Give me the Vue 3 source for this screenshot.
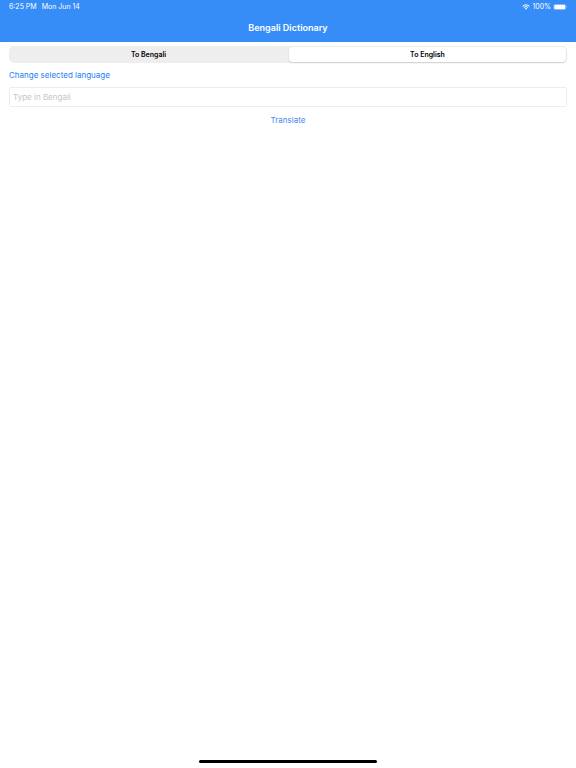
<script setup>
import { ref } from 'vue'

const direction = ref('english')
const word = ref('')

const directions = [
  { value: 'bengali', label: 'To Bengali' },
  { value: 'english', label: 'To English' },
]
</script>

<template>
  <div class="screen">
    <header class="top">
      <div class="status">
        <div class="status-group status-group--left">
          <span>6:25 PM</span>
          <span>Mon Jun 14</span>
        </div>
        <div class="status-group">
          <svg class="wifi" viewBox="0 0 16 12" aria-hidden="true">
            <path d="M1 4.6a10 10 0 0 1 14 0" />
            <path d="M3.5 7.2a6.4 6.4 0 0 1 9 0" />
            <path class="wifi-dot" d="M5.6 9.2a3.4 3.4 0 0 1 4.8 0L8 11.7z" />
          </svg>
          <span>100%</span>
          <svg class="battery" viewBox="0 0 28 12" aria-hidden="true">
            <rect class="battery-case" x="0.5" y="0.5" width="24" height="11" rx="3.4" />
            <rect class="battery-fill" x="1.5" y="1.5" width="22" height="9" rx="2.6" />
            <path class="battery-cap" d="M26 4v4c.9-.3 1.4-1.1 1.4-2s-.5-1.7-1.4-2z" />
          </svg>
        </div>
      </div>
      <h1 class="title">Bengali Dictionary</h1>
    </header>

    <main class="content">
      <div class="segment" role="radiogroup" aria-label="Direction">
        <label v-for="d in directions" :key="d.value" class="segment-item">
          <input v-model="direction" class="segment-input" type="radio" name="direction" :value="d.value" />
          <span class="segment-label">{{ d.label }}</span>
        </label>
      </div>

      <button type="button" class="link">Change selected language</button>

      <input v-model="word" class="field" type="text" placeholder="Type in Bengali" aria-label="Type in Bengali" />

      <button type="button" class="translate">Translate</button>
    </main>

    <div class="home"></div>
  </div>
</template>

<style>
body { background: #fff; }
</style>

<style scoped>
.screen {
  display: flex; flex-direction: column;
  min-height: 100vh; box-sizing: border-box;
  background: #fff; color: #000;
  font-family: Inter, "Liberation Sans", sans-serif;
}

.top { background: #368df7; color: #fff; }
.status {
  display: flex; justify-content: space-between; align-items: center;
  height: 14px; padding: 0 8px 0 9px;
  font-size: 7px; line-height: 14px;
}
.status-group { display: flex; align-items: center; gap: 2px; }
.status-group--left { gap: 5px; }

.wifi { width: 8px; height: 6px; fill: none; stroke: #fff; stroke-width: 2; }
.wifi-dot { fill: #fff; stroke: none; }
.battery { width: 15px; height: 6px; }
.battery-case { fill: none; stroke: #fff; stroke-opacity: 0.5; }
.battery-fill { fill: #fff; }
.battery-cap { fill: #fff; fill-opacity: 0.5; }

.title {
  margin: 0; height: 28px;
  font-size: 9px; font-weight: 600; line-height: 28px; text-align: center;
}

.content {
  display: flex; flex-direction: column; flex: 1;
  padding: 4px 9px 0;
}

.segment {
  display: flex; gap: 2px; height: 17px; padding: 1px;
  box-sizing: border-box; border-radius: 5px; background: #eeeeee;
}
.segment-item { flex: 1; display: flex; position: relative; cursor: pointer; }
.segment-input {
  position: absolute; inset: 0; width: 100%; height: 100%;
  margin: 0; opacity: 0; cursor: pointer;
}
.segment-label {
  flex: 1; border-radius: 4px;
  font-size: 7px; font-weight: 600; line-height: 15px; text-align: center;
}
.segment-input:checked + .segment-label {
  background: #fff;
  box-shadow: 0 1px 2px rgba(0, 0, 0, 0.14);
}

.link, .translate {
  padding: 0; border: none; background: transparent;
  font-family: inherit; font-size: 8px; line-height: 12px;
  cursor: pointer;
}
.link { align-self: flex-start; margin-top: 6px; color: #1c80f0; }
.translate { align-self: center; margin-top: 7px; color: #4b86ee; }

.field {
  height: 20px; margin-top: 6px; padding: 0 3px;
  box-sizing: border-box; border: 1px solid #ededed; border-radius: 2px;
  background: #fff; outline: none;
  font-family: inherit; font-size: 8px; color: #000;
}
.field::placeholder { color: #c6c6c8; opacity: 1; }
.field:focus { border-color: #bcd8fb; }

.home {
  align-self: center; width: 31%; height: 3px; margin-bottom: 5px;
  border-radius: 2px; background: #000;
}
</style>
